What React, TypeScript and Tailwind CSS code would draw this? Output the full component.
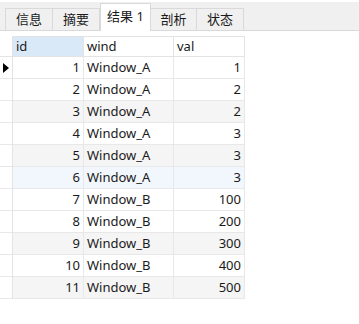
import React from "react";

const rows: [number, string, number][] = [
  [1, "Window_A", 1],
  [2, "Window_A", 2],
  [3, "Window_A", 2],
  [4, "Window_A", 3],
  [5, "Window_A", 3],
  [6, "Window_A", 3],
  [7, "Window_B", 100],
  [8, "Window_B", 200],
  [9, "Window_B", 300],
  [10, "Window_B", 400],
  [11, "Window_B", 500],
];

const tabs = ["信息", "摘要", "结果 1", "剖析", "状态"];
const tabW = ["w-[48px]", "w-[47px]", "w-[51px]", "w-[46px]", "w-[47px]"];

export default function App() {
  const font = { fontFamily: '"Noto Sans", "Noto Sans CJK SC", sans-serif' };
  return (
    <div className="w-[359px] h-[324px] bg-white text-[13px] text-[#1a1a1a] overflow-hidden" style={font}>
      <div className="h-[2px] bg-white" />
      <div className="h-[29px] bg-[#f0f0f0] border-b border-[#d9d9d9] flex items-end pl-[5px]">
        {tabs.map((t, i) =>
          i === 2 ? (
            <div
              key={t}
              className={`${tabW[i]} h-[28px] -mb-px bg-white border border-b-0 border-[#d9d9d9] flex items-center justify-center pb-[2px]`}
            >
              {t}
            </div>
          ) : (
            <div
              key={t}
              className={`${tabW[i]} h-[22px] bg-[#f0f0f0] border border-b-0 border-l-0 first:border-l border-[#d9d9d9] flex items-center justify-center`}
            >
              {t}
            </div>
          )
        )}
      </div>
      <div className="pt-[5px]">
        <div className="flex">
          <div className="w-[13px] border-r border-[#e3e3e3]">
            <div className="h-[21px] border-b border-[#e3e3e3]" />
            {rows.map((r, i) => (
              <div key={i} className="h-[22px] border-b border-[#e8e8e8] flex items-center justify-center">
                {i === 0 ? (
                  <svg width="6" height="10" viewBox="0 0 6 10">
                    <path d="M0 0 L6 5 L0 10 Z" fill="#000" />
                  </svg>
                ) : null}
              </div>
            ))}
          </div>
          <div>
            <div className="flex h-[21px] border-b border-[#e3e3e3] border-t">
              <div className="w-[71px] bg-[#d9e9f8] border-r border-[#e3e3e3] pl-[3px] flex items-center">id</div>
              <div className="w-[90px] border-r border-[#e3e3e3] pl-[3px] flex items-center">wind</div>
              <div className="w-[71px] border-r border-[#e3e3e3] pl-[3px] flex items-center">val</div>
            </div>
            {rows.map((r, i) => {
              const bg =
                i === 5 ? "bg-[#f2f7fd]" : i % 2 === 0 && i !== 0 && i !== 6 ? "bg-[#f5f5f5]" : "bg-white";
              return (
                <div key={i} className={`flex h-[22px] border-b border-[#e8e8e8] ${bg}`}>
                  <div className="w-[71px] border-r border-[#e8e8e8] pr-[3px] flex items-center justify-end">{r[0]}</div>
                  <div className="w-[90px] border-r border-[#e8e8e8] pl-[3px] flex items-center">{r[1]}</div>
                  <div className="w-[71px] border-r border-[#e8e8e8] pr-[3px] flex items-center justify-end">{r[2]}</div>
                </div>
              );
            })}
          </div>
        </div>
      </div>
    </div>
  );
}
